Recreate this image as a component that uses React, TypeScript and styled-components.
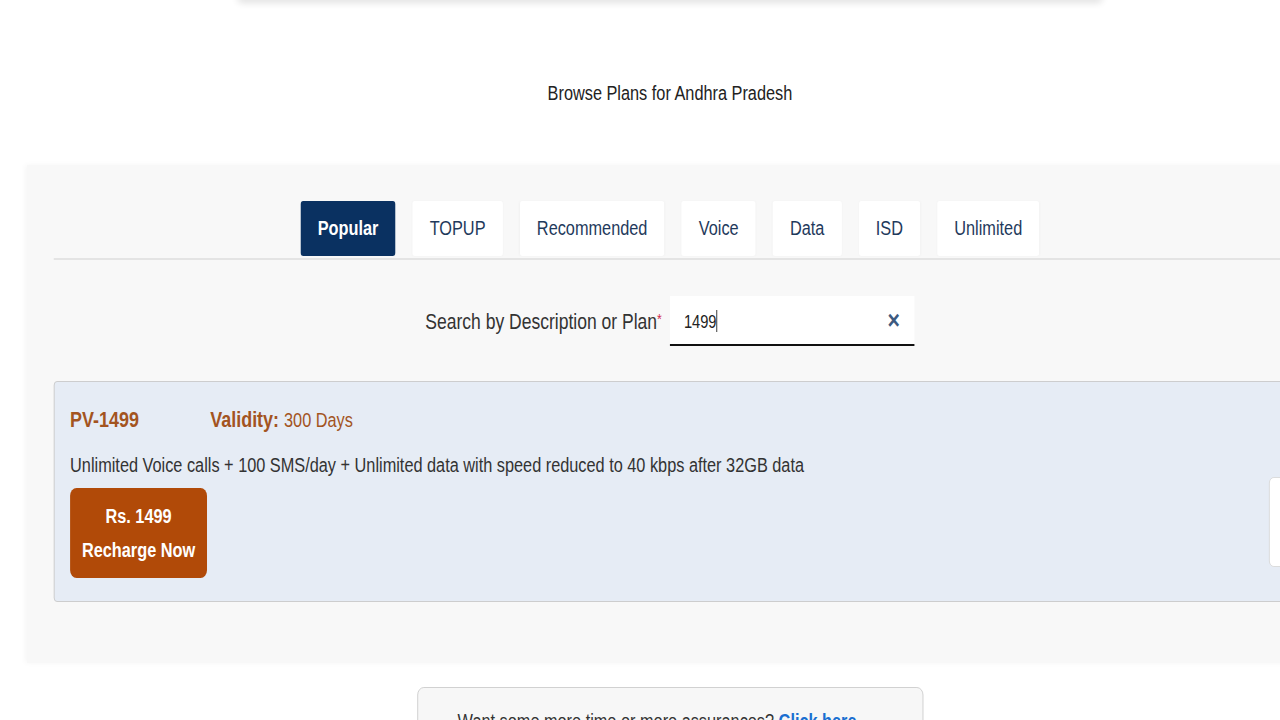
import React from 'react';
import styled, { createGlobalStyle } from 'styled-components';

// the reference is a horizontally squeezed capture, so the page is laid out
// wide and squeezed back to 1280 with one transform
const SQUEEZE = 0.815;

const GlobalStyle = createGlobalStyle`
  html, body {
    margin: 0;
    padding: 0;
    width: 1280px;
    height: 720px;
    overflow: hidden;
    background: #ffffff;
    font-family: "Liberation Sans", Arial, sans-serif;
  }
  * { box-sizing: border-box; }
`;

const Stage = styled.div`
  width: 1644px;
  height: 720px;
  overflow: hidden;
  transform: scaleX(${SQUEEZE});
  transform-origin: 0 0;
  display: flex;
  flex-direction: column;
  align-items: center;
`;

const TopCard = styled.div`
  width: 1062px;
  height: 8px;
  margin-top: -8px;
  flex-shrink: 0;
  background: #ffffff;
  box-shadow: 0 3px 8px rgba(0, 0, 0, 0.12);
  border-radius: 0 0 6px 6px;
`;

const Title = styled.h2`
  margin: 81px 0 0;
  font-size: 20px;
  font-weight: normal;
  color: #222222;
  line-height: 24px;
`;

const Panel = styled.section`
  align-self: stretch;
  margin: 60px 33px 0;
  height: 498px;
  flex-shrink: 0;
  background: #f8f8f8;
  box-shadow: -2px 0 6px rgba(0, 0, 0, 0.04);
  padding: 36px 33px 0;
  display: flex;
  flex-direction: column;
`;

const TabBar = styled.nav`
  display: flex;
  justify-content: center;
  gap: 21px;
  border-bottom: 2px solid #e4e4e4;
  padding-bottom: 2px;
`;

const Tab = styled.button<{ $active?: boolean }>`
  height: 55px;
  padding: 0 21px;
  border: none;
  border-radius: 3px;
  font-family: inherit;
  font-size: 20px;
  color: ${({ $active }) => ($active ? '#ffffff' : '#1f3a5c')};
  background: ${({ $active }) => ($active ? '#0a3161' : '#ffffff')};
  font-weight: ${({ $active }) => ($active ? 'bold' : 'normal')};
  box-shadow: ${({ $active }) => ($active ? 'none' : '0 0 3px rgba(0,0,0,0.03)')};
  cursor: pointer;
`;

const SearchRow = styled.div`
  display: flex;
  justify-content: center;
  align-items: center;
  gap: 10px;
  margin-top: 36px;
`;

const Label = styled.label`
  font-size: 21.5px;
  color: #333333;
  padding-top: 2px;
  span { color: #d1284b; font-size: 15px; vertical-align: top; }
`;

const InputBox = styled.div`
  width: 300px;
  height: 50px;
  background: #ffffff;
  border-bottom: 2px solid #111111;
  display: flex;
  align-items: center;
  padding: 0 18px 0 17px;
`;

const InputText = styled.span`
  flex: 1;
  font-size: 18px;
  color: #222222;
  padding-top: 2px;
  &::after {
    content: '';
    display: inline-block;
    width: 1px;
    height: 22px;
    background: #111;
    vertical-align: -4px;
  }
`;

const Clear = styled.span`
  font-size: 26px;
  font-weight: bold;
  color: #3d5a80;
`;

const PlanCard = styled.article`
  margin-top: 35px;
  height: 221px;
  background: #e6ecf5;
  border: 1px solid #c9c9c9;
  border-radius: 4px;
  padding: 25px 19px 0;
  position: relative;
`;

const PlanHead = styled.div`
  display: flex;
  align-items: baseline;
  line-height: 26px;
  color: #a3541f;
  font-weight: bold;
`;

const PlanName = styled.span`
  font-size: 22px;
  width: 172px;
`;

const Validity = styled.span`
  font-size: 22px;
  span { font-weight: normal; font-size: 20px; }
`;

const Desc = styled.p`
  margin: 20px 0 11px;
  font-size: 20px;
  line-height: 24px;
  color: #333333;
`;

const RechargeBtn = styled.button`
  width: 168px;
  height: 90px;
  border: none;
  border-radius: 8px;
  background: #b14a08;
  color: #ffffff;
  font-family: inherit;
  font-weight: bold;
  font-size: 20px;
  line-height: 34px;
`;

const SideTab = styled.div`
  position: absolute;
  right: -40px;
  top: 95px;
  width: 60px;
  height: 90px;
  background: #ffffff;
  border: 1px solid #d8d8d8;
  border-radius: 6px;
`;

const HelpBox = styled.div`
  margin-top: 24px;
  width: 621px;
  height: 60px;
  flex-shrink: 0;
  border: 1px solid #cccccc;
  border-radius: 8px;
  background: #f7f7f7;
  padding: 21px 0 0 49px;
  font-size: 20px;
  line-height: 24px;
  color: #333;
  a { color: #1a6fd1; font-weight: bold; text-decoration: none; }
`;

const tabs = ['Popular', 'TOPUP', 'Recommended', 'Voice', 'Data', 'ISD', 'Unlimited'];

export default function App() {
  return (
    <>
      <GlobalStyle />
      <Stage>
        <TopCard />
        <Title>Browse Plans for Andhra Pradesh</Title>
        <Panel>
          <TabBar>
            {tabs.map((t, i) => (
              <Tab key={t} $active={i === 0}>{t}</Tab>
            ))}
          </TabBar>
          <SearchRow>
            <Label>Search by Description or Plan<span>*</span></Label>
            <InputBox>
              <InputText>1499</InputText>
              <Clear>×</Clear>
            </InputBox>
          </SearchRow>
          <PlanCard>
            <PlanHead>
              <PlanName>PV-1499</PlanName>
              <Validity>Validity: <span>300 Days</span></Validity>
            </PlanHead>
            <Desc>Unlimited Voice calls + 100 SMS/day + Unlimited data with speed reduced to 40 kbps after 32GB data</Desc>
            <RechargeBtn>Rs. 1499<br />Recharge Now</RechargeBtn>
            <SideTab />
          </PlanCard>
        </Panel>
        <HelpBox>Want some more time or more assurances? <a href="#">Click here</a></HelpBox>
      </Stage>
    </>
  );
}
